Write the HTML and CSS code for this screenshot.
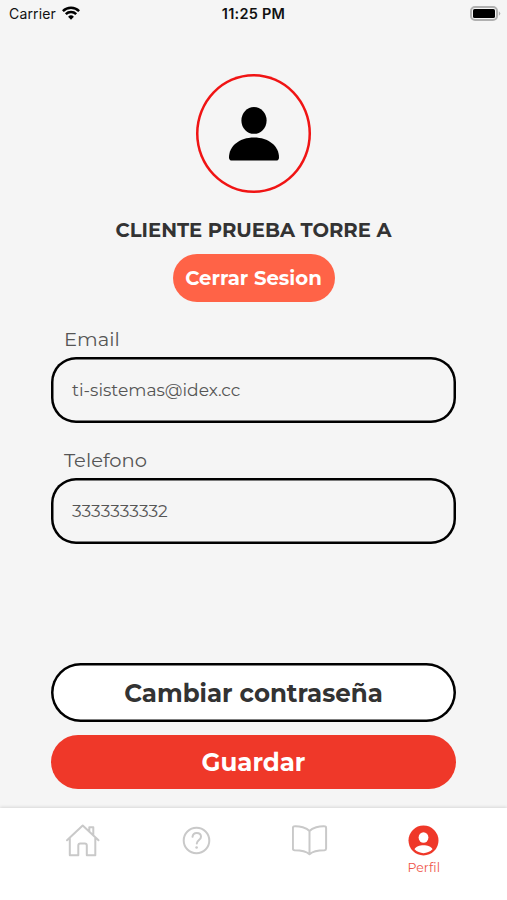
FILE: index.html
```html
<!DOCTYPE html>
<html lang="es">
<head>
    <meta charset="UTF-8">
    <meta name="viewport" content="width=device-width, initial-scale=1.0">
    <title>Perfil</title>
    <link rel="stylesheet" href="styles.css">
</head>
<body>
    <header class="status-bar">
        <div class="carrier">
            <span>Carrier</span>
            <svg width="18" height="14" viewBox="0 0 18 14">
                <path d="M.9 5.1a11.6 11.6 0 0 1 16.2 0M3.8 8.2a7.4 7.4 0 0 1 10.4 0" fill="none" stroke="#000" stroke-width="2.5"/>
                <path d="M9 13.8l-2.9-3a4.1 4.1 0 0 1 5.8 0z"/>
            </svg>
        </div>
        <span class="time">11:25 PM</span>
        <svg class="battery" width="31" height="15" viewBox="0 0 31 15">
            <rect x="1" y="1" width="26" height="13" rx="4" fill="none" stroke="#b0b0b0" stroke-width="2"/>
            <rect x="3" y="3" width="22" height="9" rx="1.6"/>
            <path d="M28.8 5.2q3 2.3 0 4.6z" fill="#b0b0b0"/>
        </svg>
    </header>

    <main class="profile">
        <div class="avatar">
            <svg width="50" height="54" viewBox="0 0 50 54">
                <ellipse cx="25" cy="13.4" rx="12.6" ry="13.4"/>
                <path d="M3 53.6Q0 53.6 0 50.5C0 39 10.5 30.6 25 30.6S50 39 50 50.5Q50 53.6 47 53.6z"/>
            </svg>
        </div>
        <h1 class="name">CLIENTE PRUEBA TORRE A</h1>
        <button class="logout">Cerrar Sesion</button>

        <div class="form">
            <div class="label">Email</div>
            <div class="field">ti-sistemas@idex.cc</div>
            <div class="label">Telefono</div>
            <div class="field">3333333332</div>
        </div>

        <div class="actions">
            <button class="btn btn-outline">Cambiar contraseña</button>
            <button class="btn btn-primary">Guardar</button>
        </div>
    </main>

    <nav class="tabs">
        <a class="tab">
            <svg width="36" height="36" viewBox="0 0 36 36">
                <path d="M2 17.2L17.7 2.5 33.5 17.2M4.8 15v17.2h8.5V22.5q0-2 2-2h4.5q2 0 2 2v9.7h8.500V15M24.3 8.3V4.2h4v8"/>
            </svg>
        </a>
        <a class="tab">
            <svg width="36" height="36" viewBox="0 0 36 36">
                <circle cx="17.5" cy="17.5" r="12.8"/>
                <path d="M13.5 13.8c.3-2.5 2-3.8 4.2-3.8 2.5 0 4.3 1.5 4.3 3.7 0 3.4-4.2 3.3-4.2 6.9"/>
                <circle class="dot" cx="17.6" cy="24.5" r="1.3"/>
            </svg>
        </a>
        <a class="tab">
            <svg width="36" height="36" viewBox="0 0 36 36">
                <path d="M17.5 8C14.5 4.5 7.5 3 2.5 3.2Q.9 3.2.9 5V25.5q0 1.6 1.6 1.7c6 0 11.5.8 15 4 3.5-3.2 9-4 15-4q1.6-.1 1.6-1.7V5q0-1.8-1.6-1.8C27.5 3 20.5 4.5 17.5 8zM17.5 8v23"/>
            </svg>
        </a>
        <a class="tab">
            <svg width="36" height="36" viewBox="0 0 36 36">
                <circle class="disc" cx="17.5" cy="17.5" r="15"/>
                <ellipse class="person" cx="17.5" cy="14.5" rx="4.9" ry="5.2"/>
                <path class="person" d="M8.5 26.3C11 21 24 21 26.5 26.3 21.5 31.4 13.5 31.4 8.5 26.3z"/>
            </svg>
            <span class="tab-label">Perfil</span>
        </a>
    </nav>
</body>
</html>
```

FILE: styles.css
```css
* {
    box-sizing: border-box;
}
body {
    display: flex;
    flex-direction: column;
    height: 100vh;
    margin: 0;
    font-family: Montserrat, Inter, sans-serif;
    color: #333;
    background-color: #f5f5f5;
    overflow: hidden;
}
button {
    font-family: inherit;
    border: none;
    padding: 0;
    white-space: nowrap;
}
.status-bar {
    display: grid;
    grid-template-columns: 1fr auto 1fr;
    align-items: center;
    height: 28px;
    padding: 0 6px 2px 9px;
    font-family: Inter, sans-serif;
    font-size: 14px;
    color: #111;
}
.carrier {
    display: flex;
    align-items: center;
    gap: 6px;
    letter-spacing: 0.15px;
}
.time {
    margin-right: 3px;
    font-size: 14.5px;
    font-weight: 600;
    letter-spacing: 0.25px;
}
.battery {
    justify-self: end;
}
.profile {
    display: flex;
    flex-direction: column;
    align-items: center;
    flex: 1;
    padding-top: 46px;
}
.avatar {
    display: flex;
    justify-content: center;
    align-items: center;
    width: 115px;
    height: 119px;
    box-shadow: inset 0 0 0 2.5px #f01414;
    border-radius: 50%;
}
.name {
    margin: 25px 0 12px;
    font-size: 19.6px;
    line-height: 24px;
    font-weight: 700;
}
.logout {
    width: 162px;
    height: 48px;
    border-radius: 24px;
    background-color: #ff6347;
    color: #fff;
    font-size: 19.7px;
    font-weight: 700;
}
.form {
    display: flex;
    flex-direction: column;
    width: 405px;
    margin-top: 25px;
}
.label {
    height: 30px;
    padding-left: 13px;
    font-size: 19.5px;
    line-height: 24px;
    color: #555;
}
.field {
    height: 66px;
    margin-bottom: 24.5px;
    padding-left: 21px;
    box-shadow: inset 0 0 0 2.5px #000;
    border-radius: 25px;
    font-size: 17.1px;
    line-height: 65px;
    color: #555;
}
.actions {
    display: flex;
    flex-direction: column;
    gap: 13px;
    width: 405px;
    margin-top: 95px;
}
.btn {
    height: 54px;
    border-radius: 30px;
    font-size: 24.5px;
    font-weight: 700;
}
.btn-outline {
    height: 59px;
    box-shadow: inset 0 0 0 2.5px #000;
    background-color: #fff;
    color: #333;
}
.btn-primary {
    background-color: #ef3829;
    color: #fff;
}
.tabs {
    display: grid;
    grid-template-columns: repeat(4, 113.5px);
    justify-content: center;
    height: 92px;
    padding-top: 15px;
    background-color: #fff;
    box-shadow: 0 -1px 3px rgba(0, 0, 0, 0.12);
}
.tab {
    display: flex;
    flex-direction: column;
    align-items: center;
    fill: none;
    stroke: #c9c9c9;
    stroke-width: 2;
    stroke-linecap: round;
    stroke-linejoin: round;
}
.dot {
    fill: #c9c9c9;
    stroke: none;
}
.disc {
    fill: #ef3829;
    stroke: none;
}
.person {
    fill: #fff;
    stroke: none;
}
.tab-label {
    margin-top: 1px;
    font-size: 12.5px;
    line-height: 16px;
    color: #ef5549;
}
```
